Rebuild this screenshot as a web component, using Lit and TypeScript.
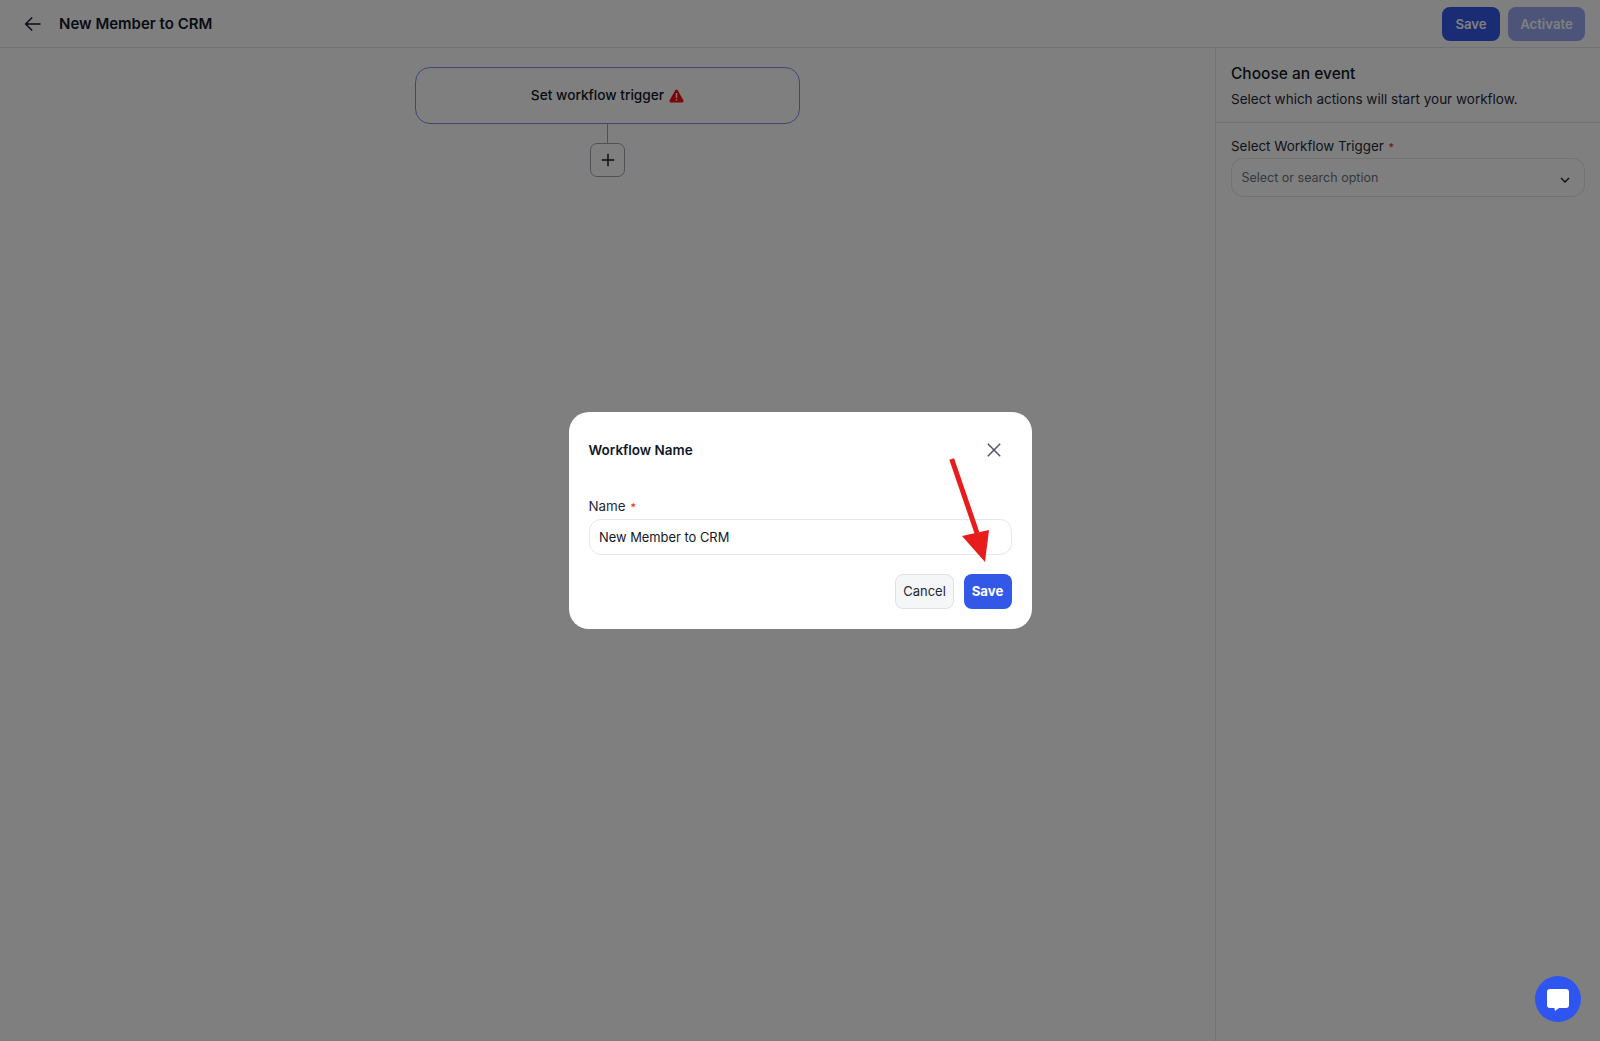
import {css, html, LitElement} from 'lit';
import {customElement} from 'lit/decorators.js';

@customElement('app-root')
export class AppRoot extends LitElement {
	protected render() {
		return html`
		<div class="page">
			<header class="topbar">
				<div class="title-wrap">
					<svg class="back" width="18" height="18" viewBox="0 0 18 18" fill="none" stroke="currentColor" stroke-width="1.4">
						<path d="M16.5 9H1.8M8.2 2.4 1.6 9l6.6 6.6"/>
					</svg>
					<span class="title">New Member to CRM</span>
				</div>
				<div class="actions">
					<button class="btn primary save">Save</button>
					<button class="btn primary disabled">Activate</button>
				</div>
			</header>
			<div class="body">
				<main class="canvas">
					<div class="node">
						<span>Set workflow trigger</span>
						<svg class="warn" width="15" height="14" viewBox="0 0 15 14">
							<path d="M7.5.6c-.5 0-.9.3-1.200.7L.6 11.300c-.5.9.1 2.100 1.200 2.100h11.400c1.100 0 1.700-1.200 1.200-2.100L8.700 1.300C8.400.9 8 .6 7.500.6Z" fill="#ff0a0a"/>
							<path d="M6.800 4h1.400v5H6.800zM6.800 10h1.400v1.500H6.800z" fill="#fff"/>
						</svg>
					</div>
					<div class="connector"></div>
					<div class="add">
						<svg width="14" height="14" viewBox="0 0 14 14" fill="none" stroke="currentColor" stroke-width="1.400"><path d="M7 .8v12.400M.8 7h12.400"/></svg>
					</div>
				</main>
				<aside class="panel">
					<div class="panel-head">
						<div class="panel-title">Choose an event</div>
						<div class="panel-sub">Select which actions will start your workflow.</div>
					</div>
					<div class="panel-form">
						<div class="label">Select Workflow Trigger <span class="req">*</span></div>
						<div class="select">
							<span>Select or search option</span>
							<svg width="10" height="6" viewBox="0 0 10 6" fill="none" stroke="currentColor" stroke-width="1.300"><path d="m1 1 4 4 4-4"/></svg>
						</div>
					</div>
				</aside>
			</div>
		</div>
		<div class="overlay">
			<div class="modal">
				<div class="modal-head">
					<span class="modal-title">Workflow Name</span>
					<svg class="close" width="14" height="14" viewBox="0 0 14 14" fill="none" stroke="currentColor" stroke-width="1.500"><path d="m.8.8 12.400 12.400M13.200.8.800 13.200"/></svg>
				</div>
				<div class="label name-label">Name <span class="req">*</span></div>
				<div class="input">New Member to CRM</div>
				<div class="modal-actions">
					<button class="btn cancel">Cancel</button>
					<button class="btn primary small">Save</button>
				</div>
				<svg class="annotation" width="50" height="110" viewBox="0 0 50 110">
					<path d="M3.700 4 29 78" stroke="#e81c1c" stroke-width="5" fill="none"/>
					<path d="M14 81 41 75 37 107Z" fill="#e81c1c"/>
				</svg>
			</div>
		</div>
		<div class="chat">
			<svg width="24" height="24" viewBox="0 0 24 24">
				<path d="M4 2h16a3 3 0 0 1 3 3v13a3 3 0 0 1-3 3h-7l-4 3-.6-3H4a3 3 0 0 1-3-3V5a3 3 0 0 1 3-3Z" fill="#fff"/>
			</svg>
		</div>
		`;
	}

	static styles = css`
		:host {
			display: block;
			position: relative;
			height: 100vh;
			overflow: hidden;
			font-family: Inter, "Liberation Sans", sans-serif;
			color: #111827;
			background: #fff;
		}
		.page {
			display: flex;
			flex-direction: column;
			height: 100%;
		}
		.topbar {
			display: flex;
			align-items: center;
			justify-content: space-between;
			height: 47px;
			padding: 0 15px 0 24px;
			border-bottom: 1px solid #e5e7eb;
			flex-shrink: 0;
		}
		.title-wrap {
			display: flex;
			align-items: center;
			gap: 17px;
		}
		.back {
			display: block;
		}
		.title {
			font-size: 15px;
			font-weight: 600;
		}
		.actions {
			display: flex;
			gap: 8px;
		}
		.btn {
			font-family: inherit;
			font-size: 13.2px;
			font-weight: 600;
			height: 34px;
			padding: 0;
			border-radius: 8px;
			border: none;
		}
		.primary {
			background: #3358e8;
			color: #fff;
			width: 77px;
		}
		.save {
			width: 58px;
		}
		.disabled {
			opacity: 0.5;
		}
		.small {
			width: 48px;
			height: 35px;
			padding-bottom: 1px;
			font-weight: 700;
		}
		.cancel {
			width: 59px;
			height: 35px;
			padding-bottom: 1px;
			font-size: 13px;
			font-weight: 400;
			background: #f5f6f8;
			border: 1px solid #e0e2e6;
			color: #1f2937;
		}
		.body {
			display: flex;
			flex: 1;
			min-height: 0;
		}
		.canvas {
			flex: 1;
			display: flex;
			flex-direction: column;
			align-items: center;
			padding-top: 19px;
		}
		.node {
			box-sizing: border-box;
			width: 385px;
			height: 57px;
			padding-bottom: 2px;
			display: flex;
			align-items: center;
			justify-content: center;
			gap: 5px;
			border: 1px solid #7b92e8;
			border-radius: 15px;
			font-size: 13.7px;
			font-weight: 500;
		}
		.warn {
			margin-top: 2px;
		}
		.connector {
			width: 1px;
			height: 19px;
			background: #9ca3af;
		}
		.add {
			box-sizing: border-box;
			width: 35px;
			height: 34px;
			display: flex;
			align-items: center;
			justify-content: center;
			border: 1px solid #9ca3af;
			border-radius: 7px;
		}
		.panel {
			box-sizing: border-box;
			width: 385px;
			border-left: 1px solid #e5e7eb;
		}
		.panel-head {
			height: 75px;
			box-sizing: border-box;
			padding: 16px 15px 0;
			border-bottom: 1px solid #e5e7eb;
		}
		.panel-title {
			font-size: 15.5px;
			font-weight: 500;
			line-height: 20px;
		}
		.panel-sub {
			font-size: 13.5px;
			line-height: 18px;
			margin-top: 6px;
			color: #1f2937;
		}
		.panel-form {
			padding: 14px 15px 0 15px;
		}
		.label {
			font-size: 13.4px;
			line-height: 18px;
			color: #1f2937;
		}
		.req {
			color: #e81c1c;
			font-size: 11px;
			margin-left: 1px;
		}
		.select {
			box-sizing: border-box;
			height: 39px;
			margin-top: 2px;
			padding: 0 14px 0 9.5px;
			display: flex;
			align-items: center;
			justify-content: space-between;
			border: 1px solid #e5e7eb;
			border-radius: 12px;
			font-size: 12.5px;
			color: #6b7280;
		}
		.select svg {
			color: #111827;
			margin-top: 5px;
		}
		.overlay {
			position: absolute;
			inset: 0;
			display: flex;
			align-items: center;
			justify-content: center;
			background: rgba(0, 0, 0, 0.5);
		}
		.modal {
			position: relative;
			box-sizing: border-box;
			width: 463px;
			height: 217px;
			padding: 0 20px;
			background: #fff;
			border-radius: 20px;
		}
		.modal-head {
			display: flex;
			align-items: center;
			justify-content: space-between;
			height: 75px;
			padding-right: 11px;
		}
		.modal-title {
			font-size: 13.5px;
			font-weight: 600;
		}
		.close {
			color: #4b5563;
		}
		.name-label {
			margin-top: 10px;
		}
		.input {
			box-sizing: border-box;
			height: 36px;
			margin-top: 3px;
			padding: 0 9.5px;
			display: flex;
			align-items: center;
			border: 1px solid #e5e7eb;
			border-radius: 12px;
			font-size: 12.9px;
		}
		.modal-actions {
			display: flex;
			justify-content: flex-end;
			gap: 9.5px;
			margin-top: 19px;
		}
		.annotation {
			position: absolute;
			left: 379px;
			top: 43px;
		}
		.chat {
			position: absolute;
			left: 1535px;
			top: 976px;
			width: 46px;
			height: 46px;
			border-radius: 50%;
			background: #2f55f0;
			display: flex;
			align-items: center;
			justify-content: center;
		}
	`;
}
